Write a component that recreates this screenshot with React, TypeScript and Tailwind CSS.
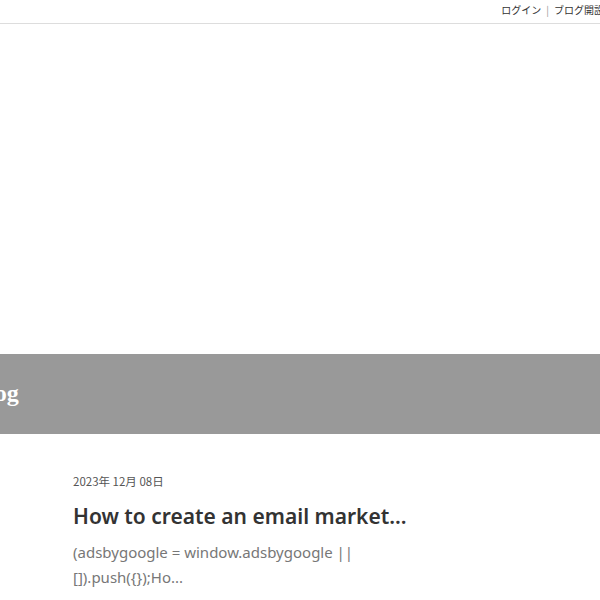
import React from "react";

export default function App() {
  const jp = { fontFamily: '"Noto Sans", "Noto Sans CJK JP", sans-serif' };
  const cjk = { fontFamily: '"Noto Sans CJK JP", sans-serif' };
  return (
    <div className="w-[600px] h-[600px] overflow-hidden bg-white" style={jp}>
      <div className="h-[24px] border-b border-[#dddddd] flex justify-end items-center">
        <div
          className="flex items-center text-[10px] text-[#333333] mr-[-4px] whitespace-nowrap leading-none pb-[3px]"
          style={cjk}
        >
          <span>ログイン</span>
          <span className="mx-[5px] text-[#999999]">|</span>
          <span>ブログ開設</span>
        </div>
      </div>
      <div className="h-[330px]" />
      <div className="h-[80px] bg-[#999999] flex items-center overflow-hidden">
        <div
          className="text-white font-bold text-[24px] whitespace-nowrap ml-[-28px] leading-none pb-[2px]"
          style={{ fontFamily: '"Liberation Serif", serif' }}
        >
          Blog
        </div>
      </div>
      <div className="pl-[73px] pt-[42px]">
        <div className="text-[11.5px] text-[#555555] leading-none" style={cjk}>
          2023年 12月 08日
        </div>
        <div className="mt-[13px] text-[21px] font-semibold text-[#333333] leading-[30px]">
          How to create an email market...
        </div>
        <div className="mt-[9px] text-[15px] text-[#777777] leading-[25px] w-[290px]">
          {"(adsbygoogle = window.adsbygoogle || []).push({});Ho..."}
        </div>
      </div>
    </div>
  );
}
